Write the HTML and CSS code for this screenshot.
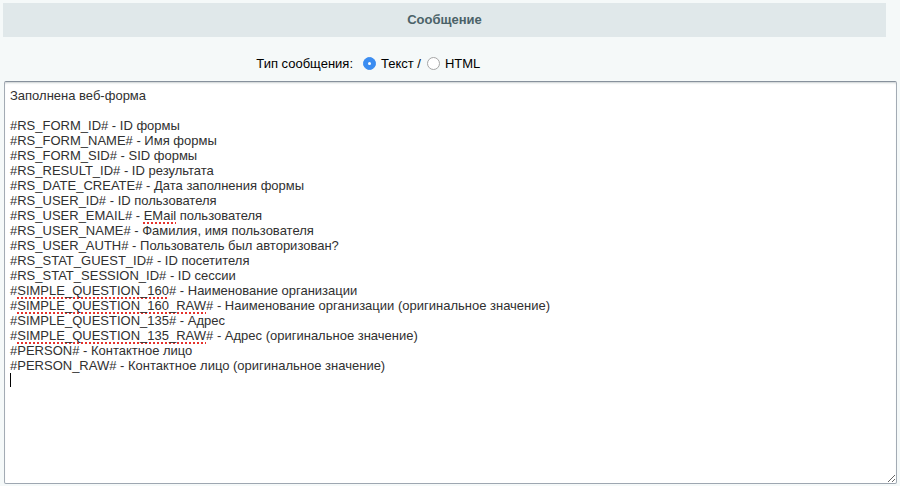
FILE: index.html
```html
<!DOCTYPE html>
<html lang="ru">
	<head>
		<meta charset="UTF-8" />
		<meta name="viewport" content="width=device-width, initial-scale=1" />
		<title>Сообщение</title>
		<link rel="stylesheet" href="styles.css">
	</head>
	<body>
		<div class="section-head">Сообщение</div>
		<div class="type-row">
			<div class="type-label">Тип сообщения:</div>
			<div class="type-value">
				<span class="radio checked"></span>
				<span class="radio-text">Текст /</span>
				<span class="radio"></span>
				<span class="radio-text">HTML</span>
			</div>
		</div>
		<div class="message-box">
			<div class="message-text">Заполнена веб-форма

#RS_FORM_ID# - ID формы
#RS_FORM_NAME# - Имя формы
#RS_FORM_SID# - SID формы
#RS_RESULT_ID# - ID результата
#RS_DATE_CREATE# - Дата заполнения формы
#RS_USER_ID# - ID пользователя
#RS_USER_EMAIL# - <span class="typo">EMail</span> пользователя
#RS_USER_NAME# - Фамилия, имя пользователя
#RS_USER_AUTH# - Пользователь был авторизован?
#RS_STAT_GUEST_ID# - ID посетителя
#RS_STAT_SESSION_ID# - ID сессии
#<span class="typo">SIMPLE_QUESTION_160</span># - Наименование организации
#<span class="typo">SIMPLE_QUESTION_160_RAW</span># - Наименование организации (оригинальное значение)
#SIMPLE_QUESTION_135# - Адрес
#<span class="typo">SIMPLE_QUESTION_135_RAW</span># - Адрес (оригинальное значение)
#PERSON# - Контактное лицо
#PERSON_RAW# - Контактное лицо (оригинальное значение)
<span class="caret"></span></div>
		</div>
	</body>
</html>
```

FILE: styles.css
```css
body {
	margin: 0;
	padding: 3px 0 0 0;
	background-color: #f5f9f9;
	font-family: "Liberation Sans", Arial, sans-serif;
	font-size: 13px;
	color: #000;
}

.section-head {
	margin: 0 14px 0 3px;
	height: 34px;
	line-height: 34px;
	background-color: #e0e8ea;
	text-align: center;
	font-weight: bold;
	font-size: 13px;
	color: #4b6268;
}

.type-row {
	display: flex;
	align-items: center;
	height: 26px;
	margin-top: 13px;
}

.type-label {
	width: 353px;
	text-align: right;
	color: #000;
}

.type-value {
	display: flex;
	align-items: center;
	margin-left: 10px;
}

.radio {
	width: 13px;
	height: 13px;
	box-sizing: border-box;
	border: 1px solid #a6a6a6;
	border-radius: 50%;
	background-color: #fff;
	position: relative;
}

.radio.checked {
	background-color: #3b8df1;
	border-color: #3b8df1;
}

.radio.checked::after {
	content: "";
	position: absolute;
	left: 4px;
	top: 4px;
	width: 3px;
	height: 3px;
	border-radius: 50%;
	background-color: #fff;
}

.radio-text {
	margin: 0 6px 0 5px;
}

.message-box {
	margin: 5px 0 0 4px;
	width: 893px;
	height: 403px;
	box-sizing: border-box;
	background-color: #fff;
	border: 1px solid;
	border-color: #87919c #a3abb4 #9ea7b1 #a3abb4;
	border-radius: 2px;
	box-shadow: inset 0 2px 2px -1px rgba(180, 188, 191, 0.7);
	resize: both;
	overflow: auto;
}

.message-text {
	padding: 6px 5px;
	white-space: pre;
	line-height: 15px;
	color: #303030;
}

.typo {
	text-decoration: underline dotted #e5322d;
	text-decoration-thickness: 2px;
	text-underline-offset: 2px;
	text-decoration-skip-ink: none;
}

.caret {
	display: inline-block;
	width: 1px;
	height: 14px;
	background-color: #000;
	vertical-align: top;
}
```
